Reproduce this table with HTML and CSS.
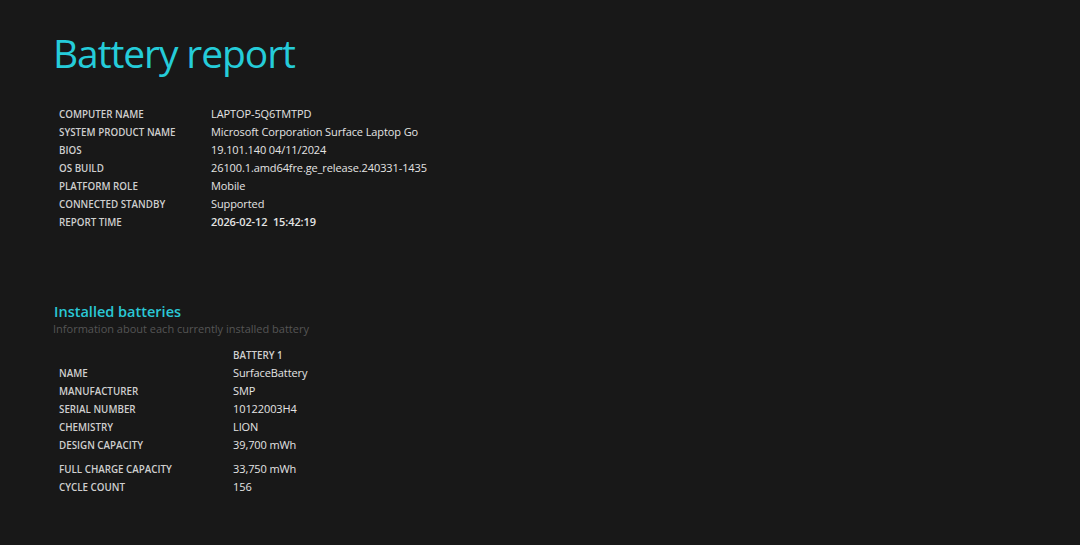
FILE: index.html
```html
<!DOCTYPE html>
<html>
<head>
<meta charset="utf-8">
<link rel="stylesheet" href="styles.css">
</head>
<body>
<div class="page">
  <h1 class="title">Battery report</h1>
  <table class="info">
    <tr><td class="label">Computer name</td><td class="value">LAPTOP-5Q6TMTPD</td></tr>
    <tr><td class="label">System product name</td><td class="value">Microsoft Corporation Surface Laptop Go</td></tr>
    <tr><td class="label">BIOS</td><td class="value">19.101.140 04/11/2024</td></tr>
    <tr><td class="label">OS build</td><td class="value">26100.1.amd64fre.ge_release.240331-1435</td></tr>
    <tr><td class="label">Platform role</td><td class="value">Mobile</td></tr>
    <tr><td class="label">Connected standby</td><td class="value">Supported</td></tr>
    <tr><td class="label">Report time</td><td class="value strong">2026-02-12&nbsp;&nbsp;15:42:19</td></tr>
  </table>

  <h2 class="section">Installed batteries</h2>
  <div class="sub">Information about each currently installed battery</div>

  <table class="batt">
    <tr class="headrow"><td class="label"></td><td class="head">Battery 1</td></tr>
    <tr><td class="label">Name</td><td class="value">SurfaceBattery</td></tr>
    <tr><td class="label">Manufacturer</td><td class="value">SMP</td></tr>
    <tr><td class="label">Serial number</td><td class="value">10122003H4</td></tr>
    <tr><td class="label">Chemistry</td><td class="value">LION</td></tr>
    <tr class="gap"><td class="label">Design capacity</td><td class="value">39,700 mWh</td></tr>
    <tr><td class="label">Full charge capacity</td><td class="value">33,750 mWh</td></tr>
    <tr><td class="label">Cycle count</td><td class="value">156</td></tr>
  </table>
</div>
</body>
</html>
```

FILE: styles.css
```css
html, body {
  margin: 0;
  padding: 0;
  background: #181818;
  height: 100%;
}
body {
  font-family: "Open Sans", "Noto Sans", sans-serif;
  color: #e6e6e6;
}
.page {
  padding: 27px 0 0 53px;
}
.title {
  margin: 0;
  font-size: 39px;
  font-weight: 400;
  color: #25ccd9;
  line-height: 52px;
  letter-spacing: -1.1px;
}
table {
  border-collapse: collapse;
}
td {
  padding: 0;
  line-height: 18px;
  height: 18px;
  vertical-align: middle;
  white-space: nowrap;
}
.info {
  margin: 26px 0 0 6px;
}
.info .label {
  width: 152px;
}
td.label {
  padding-top: 2px;
  line-height: 16px;
  height: 16px;
  font-size: 9.8px;
  font-weight: 600;
  text-transform: uppercase;
  color: #cfcfcf;
}
.value {
  font-size: 11px;
  color: #e4e4e4;
  letter-spacing: -0.1px;
}
.strong {
  font-weight: 600;
}
.section {
  margin: 71px 0 0 1px;
  font-size: 14.5px;
  font-weight: 600;
  color: #2ac8d6;
  line-height: 20px;
}
.sub {
  font-size: 11px;
  color: #555;
  line-height: 14px;
}
.batt {
  margin: 12px 0 0 6px;
}
.batt .label {
  width: 174px;
}
.batt .headrow td {
  padding-top: 0;
  height: 16px;
  line-height: 16px;
}
.head {
  font-size: 9.8px;
  font-weight: 600;
  text-transform: uppercase;
  color: #d0d0d0;
}
.batt tr.gap td {
  vertical-align: top;
  height: 24px;
}
.batt tr.gap td.label {
  height: 22px;
}
```
